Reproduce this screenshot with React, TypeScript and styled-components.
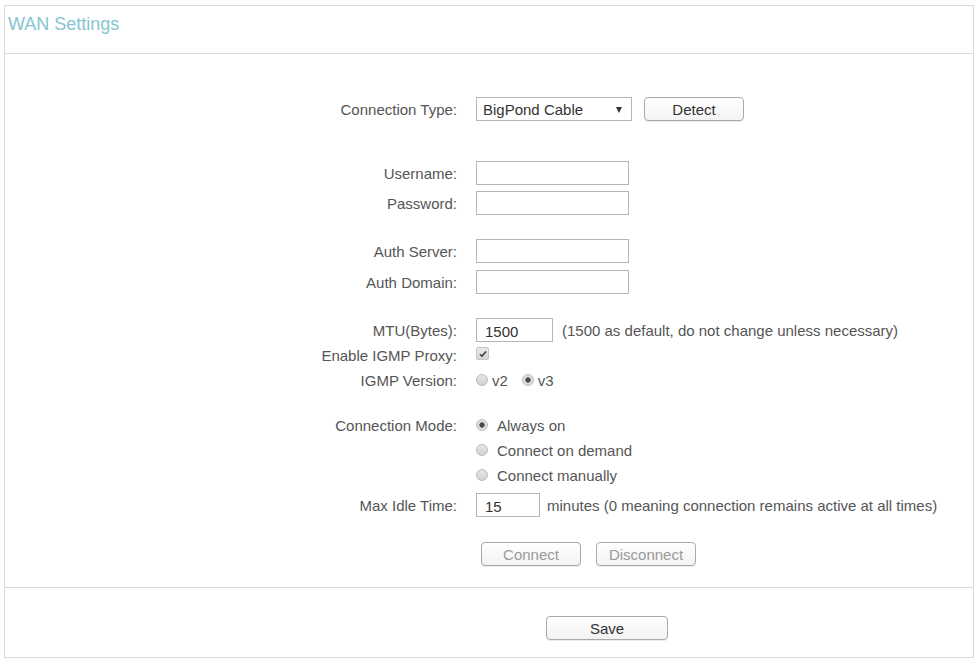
import React from "react";
import styled, { createGlobalStyle } from "styled-components";

const GlobalStyle = createGlobalStyle`
  html, body {
    margin: 0;
    padding: 0;
    background: #fff;
    font-family: "Liberation Sans", Arial, sans-serif;
  }
`;

const Page = styled.div`
  padding: 5px 2px 0 4px;
`;

const Panel = styled.div`
  width: 970px;
  box-sizing: border-box;
  border: 1px solid #d9d9d9;
`;

const Header = styled.div`
  height: 48px;
  padding: 8px 0 0 3px;
  box-sizing: border-box;
  border-bottom: 1px solid #d9d9d9;
  color: #86c5d2;
  font-size: 18px;
  line-height: 20px;
`;

const Section = styled.div`
  padding: 43px 0 21px 0;
  border-bottom: 1px solid #d9d9d9;
`;

const Row = styled.div<{ $top?: number }>`
  display: grid;
  grid-template-columns: 452px auto;
  column-gap: 19px;
  align-items: center;
  height: 24px;
  margin-top: ${(p) => p.$top ?? 0}px;
`;

const Label = styled.div`
  text-align: right;
  color: #555;
  font-size: 15px;
  white-space: nowrap;
`;

const Field = styled.div`
  display: flex;
  align-items: center;
  height: 24px;
  color: #555;
  font-size: 15px;
  white-space: nowrap;
`;

const TextInput = styled.input<{ $w: number }>`
  width: ${(p) => p.$w}px;
  height: 24px;
  box-sizing: border-box;
  border: 1px solid #b5b5b5;
  padding: 2px 8px 0 8px;
  font-family: "Liberation Sans", Arial, sans-serif;
  font-size: 15px;
  color: #333;
  background: #fff;
  outline: none;
  margin: 0;
`;

const Hint = styled.span<{ $gap: number }>`
  margin-left: ${(p) => p.$gap}px;
  color: #555;
  font-size: 15px;
`;

const SelectBox = styled.div`
  width: 156px;
  height: 24px;
  box-sizing: border-box;
  border: 1px solid #b5b5b5;
  display: flex;
  align-items: center;
  justify-content: space-between;
  padding: 1px 9px 0 6px;
  font-size: 15px;
  color: #333;
  background: #fff;
`;

const Caret = styled.span`
  width: 0;
  height: 0;
  border-left: 3px solid transparent;
  border-right: 3px solid transparent;
  border-top: 6px solid #333;
  margin-top: 1px;
`;

const Button = styled.button<{ $w: number; $disabled?: boolean; $left?: number }>`
  width: ${(p) => p.$w}px;
  height: 24px;
  margin: 0 0 0 ${(p) => p.$left ?? 0}px;
  padding: 0;
  border: 1px solid #a9a9a9;
  border-radius: 4px;
  background: linear-gradient(#ffffff, #f3f3f3);
  box-shadow: 0 1px 0 rgba(0, 0, 0, 0.08);
  font-family: "Liberation Sans", Arial, sans-serif;
  font-size: 15px;
  color: ${(p) => (p.$disabled ? "#9a9a9a" : "#333")};
  cursor: pointer;
`;

const Radio = styled.span<{ $checked?: boolean }>`
  display: inline-block;
  width: 12px;
  height: 12px;
  box-sizing: border-box;
  border-radius: 50%;
  border: 1px solid #bdbdbd;
  background: ${(p) =>
    p.$checked
      ? "radial-gradient(circle, #4a4a4a 0 2.3px, #dedede 3px)"
      : "linear-gradient(#e6e6e6, #d2d2d2)"};
  flex: none;
`;

const Choice = styled.label<{ $gap: number; $next?: number }>`
  display: inline-flex;
  align-items: center;
  gap: ${(p) => p.$gap}px;
  margin-left: ${(p) => p.$next ?? 0}px;
  color: #555;
  font-size: 15px;
`;

const CheckBox = styled.span`
  display: inline-flex;
  align-items: center;
  justify-content: center;
  width: 13px;
  height: 13px;
  box-sizing: border-box;
  border: 1px solid #c4c4c4;
  border-radius: 2px;
  background: linear-gradient(#ebebeb, #d4d4d4);
  margin-top: -3px;
`;

const Footer = styled.div`
  padding: 28px 0 17px 541px;
`;

export default function App() {
  return (
    <Page>
      <GlobalStyle />
      <Panel>
        <Header>WAN Settings</Header>
        <Section>
          <Row>
            <Label>Connection Type:</Label>
            <Field>
              <SelectBox>
                <span>BigPond Cable</span>
                <Caret />
              </SelectBox>
              <Button $w={100} $left={12}>
                Detect
              </Button>
            </Field>
          </Row>

          <Row $top={40}>
            <Label>Username:</Label>
            <Field>
              <TextInput $w={153} />
            </Field>
          </Row>
          <Row $top={6}>
            <Label>Password:</Label>
            <Field>
              <TextInput $w={153} type="password" />
            </Field>
          </Row>

          <Row $top={24}>
            <Label>Auth Server:</Label>
            <Field>
              <TextInput $w={153} />
            </Field>
          </Row>
          <Row $top={7}>
            <Label>Auth Domain:</Label>
            <Field>
              <TextInput $w={153} />
            </Field>
          </Row>

          <Row $top={24}>
            <Label>MTU(Bytes):</Label>
            <Field>
              <TextInput $w={77} defaultValue="1500" />
              <Hint $gap={9}>(1500 as default, do not change unless necessary)</Hint>
            </Field>
          </Row>
          <Row $top={1}>
            <Label>Enable IGMP Proxy:</Label>
            <Field>
              <CheckBox>
                <svg width="8" height="8" viewBox="0 0 8 8">
                  <path d="M1 4.2 L3 6.2 L7 1.6" fill="none" stroke="#3a3a3a" strokeWidth="1.6" />
                </svg>
              </CheckBox>
            </Field>
          </Row>
          <Row $top={1}>
            <Label>IGMP Version:</Label>
            <Field>
              <Choice $gap={4}>
                <Radio />
                v2
              </Choice>
              <Choice $gap={4} $next={14}>
                <Radio $checked />
                v3
              </Choice>
            </Field>
          </Row>

          <Row $top={21}>
            <Label>Connection Mode:</Label>
            <Field>
              <Choice $gap={9}>
                <Radio $checked />
                Always on
              </Choice>
            </Field>
          </Row>
          <Row $top={1}>
            <Label />
            <Field>
              <Choice $gap={9}>
                <Radio />
                Connect on demand
              </Choice>
            </Field>
          </Row>
          <Row $top={1}>
            <Label />
            <Field>
              <Choice $gap={9}>
                <Radio />
                Connect manually
              </Choice>
            </Field>
          </Row>
          <Row $top={6}>
            <Label>Max Idle Time:</Label>
            <Field>
              <TextInput $w={64} defaultValue="15" />
              <Hint $gap={7}>minutes (0 meaning connection remains active at all times)</Hint>
            </Field>
          </Row>

          <Row $top={25}>
            <Label />
            <Field>
              <Button $w={100} $left={5} $disabled>
                Connect
              </Button>
              <Button $w={100} $left={15} $disabled>
                Disconnect
              </Button>
            </Field>
          </Row>
        </Section>
        <Footer>
          <Button $w={122}>Save</Button>
        </Footer>
      </Panel>
    </Page>
  );
}
